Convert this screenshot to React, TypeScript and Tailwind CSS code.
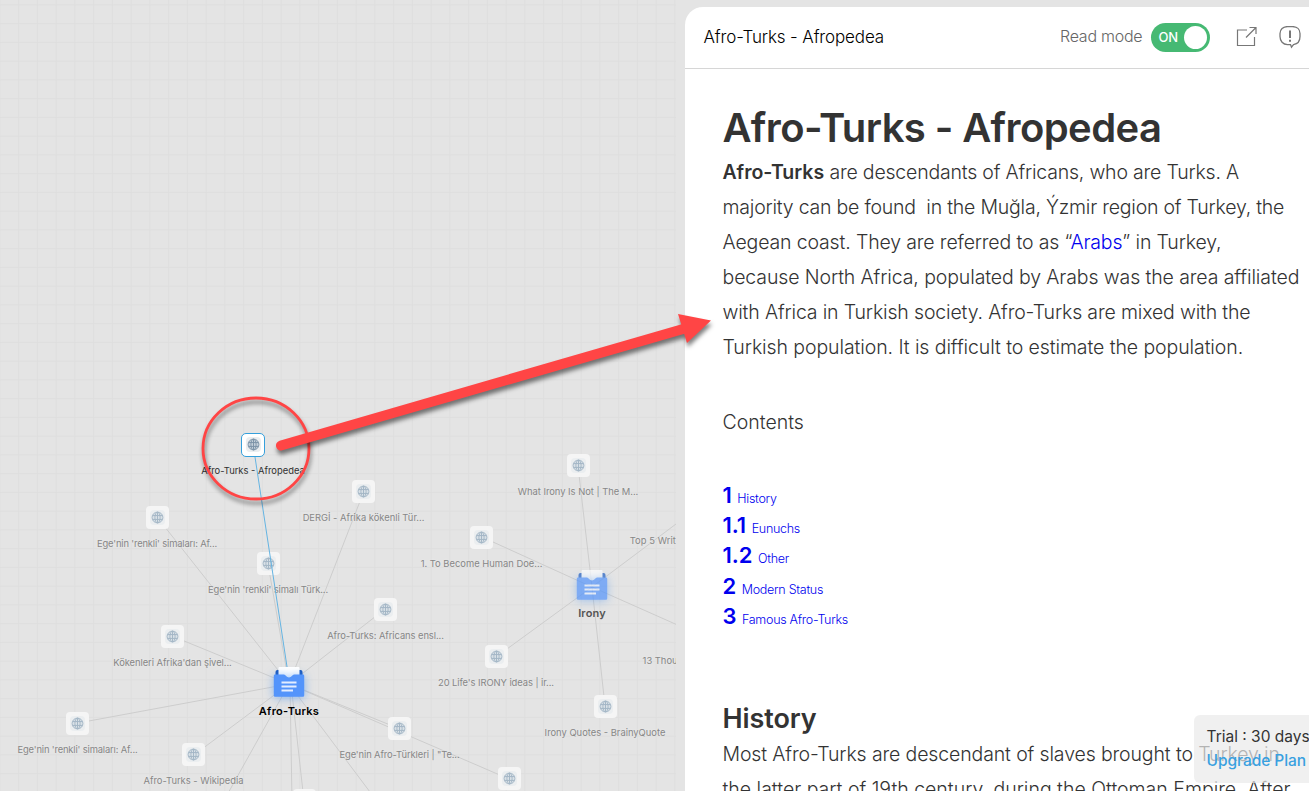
import React from "react";

type Site = { x: number; y: number; label: string; tracking: number; active?: boolean };

const sites: Site[] = [
  { x: 253, y: 444.5, label: "Afro-Turks - Afropedea", tracking: 0, active: true },
  { x: 363.5, y: 491.5, label: "DERGİ - Afrika kökenli Tür...", tracking: -0.02 },
  { x: 157, y: 517.5, label: "Ege'nin 'renkli' simaları: Af...", tracking: -0.15 },
  { x: 268, y: 564, label: "Ege'nin 'renkli' simalı Türk...", tracking: -0.12 },
  { x: 385.5, y: 609.5, label: "Afro-Turks: Africans ensl...", tracking: -0.07 },
  { x: 172.5, y: 636.5, label: "Kökenleri Afrika'dan şivel...", tracking: -0.06 },
  { x: 77.5, y: 723.5, label: "Ege'nin 'renkli' simaları: Af...", tracking: -0.15 },
  { x: 193.5, y: 755, label: "Afro-Turks - Wikipedia", tracking: -0.02 },
  { x: 399.5, y: 729, label: "Ege'nin Afro-Türkleri | \"Te...", tracking: -0.11 },
  { x: 578, y: 466, label: "What Irony Is Not | The M...", tracking: -0.02 },
  { x: 481.5, y: 537.5, label: "1. To Become Human Doe...", tracking: 0 },
  { x: 496, y: 657, label: "20 Life's IRONY ideas | ir...", tracking: -0.07 },
  { x: 605, y: 706.5, label: "Irony Quotes - BrainyQuote", tracking: 0 },
  { x: 509, y: 779, label: "", tracking: 0 },
  { x: 304, y: 801, label: "", tracking: 0 },
  { x: 690, y: 514.5, label: "Top 5 Writing Ironies Exp...", tracking: 0.07 },
  { x: 697, y: 634.5, label: "13 Thoughts on Irony a...", tracking: 0 },
];

const links: number[][] = [
  [364, 491, 289, 684], [157, 517, 289, 684], [268, 564, 289, 684],
  [385, 609, 289, 684], [172, 636, 289, 684], [78, 723, 289, 684],
  [194, 755, 289, 684], [400, 729, 289, 684], [509, 779, 289, 684],
  [304, 801, 291, 684], [292, 801, 290, 684], [379, 804, 289, 684], [222, 804, 289, 684],
  [578, 466, 592, 587], [482, 537, 592, 587], [496, 657, 592, 587],
  [605, 706, 592, 587], [704, 503, 592, 587], [700, 635, 592, 587],
];

function Globe({ active }: { active?: boolean }) {
  return (
    <svg className="h-[13px] w-[13px]" viewBox="0 0 12 12" fill="none" stroke={active ? "#7b93a8" : "#a3b6c5"} strokeWidth="0.9">
      <circle cx="6" cy="6" r="5" fill={active ? "#c3cfd9" : "#d9e1e7"} />
      <ellipse cx="6" cy="6" rx="2.4" ry="5" />
      <path d="M6 1v10M1.400 4.200h9.200M1.400 7.800h9.200" />
    </svg>
  );
}

function SiteNode({ site }: { site: Site }) {
  return (
    <div
      className="absolute flex w-40 -translate-x-1/2 flex-col items-center"
      style={{ left: site.x, top: site.y - 12 }}
    >
      <div
        className={
          site.active
            ? "flex h-6 w-6 items-center justify-center rounded-[5px] border border-[#35a0dc] bg-white"
            : "flex h-[23px] w-[23px] items-center justify-center rounded-[4px] bg-[#f5f5f5]"
        }
      >
        <div className="rounded-sm bg-[#ebeef0] p-px">
          <Globe active={site.active} />
        </div>
      </div>
      <div
        className={
          site.active
            ? "mt-2 whitespace-nowrap text-[9.4px] leading-3 text-[#303030]"
            : "mt-[9px] whitespace-nowrap text-[9.4px] leading-3 text-[#868686] [text-shadow:0_0_2px_#eee]"
        }
        style={{ letterSpacing: site.tracking }}
      >
        {site.label}
      </div>
    </div>
  );
}

function FolderNode({ x, y, label, faded }: { x: number; y: number; label: string; faded?: boolean }) {
  return (
    <div className="absolute flex w-32 -translate-x-1/2 flex-col items-center" style={{ left: x, top: y }}>
      <svg
        className={faded ? "h-[34px] w-[34px] overflow-visible opacity-70" : "h-[34px] w-[34px] overflow-visible"}
        viewBox="0 0 34 34"
      >
        <rect x="3.500" y="4" width="27" height="12" rx="2" fill="#1857bd" />
        <rect x="6.500" y="1" width="21" height="16" rx="1" fill="#fff" />
        <path
          className="[filter:drop-shadow(0_1px_5px_rgba(80,150,240,.65))]"
          d="M3 8.500h9c1.500 0 2.500 3 5 3s3.500-3 5-3H31a1.200 1.200 0 0 1 1.200 1.200V29.500a1.200 1.200 0 0 1-1.200 1.200H3a1.200 1.200 0 0 1-1.200-1.200V9.700A1.200 1.200 0 0 1 3 8.500z"
          fill="#5394fb"
        />
        <path d="M9.500 16.500h15M9.500 20.500h15M9.500 24.500h11.500" stroke="#e3edff" strokeWidth="2" />
      </svg>
      <div
        className={
          faded
            ? "mt-[3px] whitespace-nowrap text-[11px] font-semibold leading-[14px] tracking-[0.15px] text-[#555]"
            : "mt-1 whitespace-nowrap text-[11px] font-semibold leading-[14px] tracking-[0.3px] text-black"
        }
      >
        {label}
      </div>
    </div>
  );
}

function GraphCanvas() {
  return (
    <section className="relative h-full w-[676px] overflow-hidden bg-[#e4e4e4]">
      <svg className="absolute inset-0 h-full w-full">
        <defs>
          <pattern id="grid" x="-0.6" y="4.400" width="18.750" height="18.750" patternUnits="userSpaceOnUse">
            <path d="M.5 0V18.750M0 .5H18.750" stroke="#dedede" strokeWidth="1" />
          </pattern>
        </defs>
        <rect width="100%" height="100%" fill="url(#grid)" />
        {links.map(([x1, y1, x2, y2], i) => (
          <line key={i} x1={x1} y1={y1} x2={x2} y2={y2} stroke="#cdcdcd" strokeWidth="1" />
        ))}
      </svg>
      {sites.map((s, i) => (
        <SiteNode key={i} site={s} />
      ))}
      <svg className="absolute inset-0 h-full w-full">
        <line x1="255" y1="457" x2="287.500" y2="670" stroke="#65b4e2" strokeWidth="1" />
      </svg>
      <FolderNode x={289} y={666} label="Afro-Turks" />
      <FolderNode x={592} y={569} label="Irony" faded />
    </section>
  );
}

const contents = [
  ["1", "History"],
  ["1.1", "Eunuchs"],
  ["1.2", "Other"],
  ["2", "Modern Status"],
  ["3", "Famous Afro-Turks"],
];

function Reader() {
  return (
    <aside className="mt-[7px] flex w-[624px] shrink-0 flex-col overflow-hidden rounded-tl-[18px] bg-white">
      <header className="flex h-[62px] shrink-0 items-center border-b border-[#d6d6d6] pl-[18.500px]">
        <div className="w-[356.500px] whitespace-nowrap text-[17px] font-light tracking-[-0.13px] text-black">Afro-Turks - Afropedea</div>
        <div className="w-[91px] whitespace-nowrap pb-[3px] text-base font-light tracking-[-0.25px] text-[#666]">Read mode</div>
        <div className="flex h-[29px] w-[59px] items-center justify-between rounded-full bg-[#46b973] pl-[7.500px] pr-[3px]">
          <span className="text-[13px] font-medium tracking-[-0.3px] text-white">ON</span>
          <span className="h-[23px] w-[23px] rounded-full bg-white" />
        </div>
        <svg className="ml-[26px] h-6 w-6" viewBox="0 0 24 24" fill="none" stroke="#777" strokeWidth="1.200">
          <path d="M11 4H1.500v15.500h17V11M10 11.500 20 1.500M13.500 1.500H20v6.500" />
        </svg>
        <svg className="ml-[18px] h-6 w-6" viewBox="0 0 24 24" fill="none" stroke="#777" strokeWidth="1.300">
          <path d="M9.500 .6h5c4.500 0 7.500 2.800 7.500 7v3c0 4.500-2.500 7.500-6.500 8L13.500 21.100 12.500 18.600H9.500C5 18.600 2 15.100 2 10.600V7.600C2 3.400 5 .6 9.500 .6z" />
          <path d="M12 4.500v7.500M12 13.800v2" strokeWidth="2" />
        </svg>
      </header>
      <article className="flex flex-col whitespace-nowrap pl-[37.500px] pt-[34px] text-[#333]">
        <h1 className="text-[40px] font-semibold leading-[50px] tracking-[-0.58px]">Afro-Turks - Afropedea</h1>
        <p className="mt-[2px] flex flex-col text-[19.500px] font-light leading-[35px]">
          <span className="tracking-[-0.2px]">
            <b className="font-semibold tracking-normal">Afro-Turks</b> are descendants of Africans, who are Turks. A
          </span>
          <span className="tracking-[-0.22px]">majority can be found&nbsp; in the Muğla, Ýzmir region of Turkey, the</span>
          <span className="tracking-[-0.15px]">
            Aegean coast. They are referred to as “<a className="text-[#0000ee]">Arabs</a>” in Turkey,
          </span>
          <span className="tracking-[-0.11px]">because North Africa, populated by Arabs was the area affiliated</span>
          <span className="tracking-[-0.16px]">with Africa in Turkish society. Afro-Turks are mixed with the</span>
          <span className="tracking-[-0.09px]">Turkish population. It is difficult to estimate the population.</span>
        </p>
        <p className="mt-10 text-[19.500px] font-light leading-[35px]">Contents</p>
        <div className="mt-10 flex flex-col text-[#0000ee]">
          {contents.map(([n, t]) => (
            <div key={n} className="flex h-[30.200px] items-baseline gap-[5.500px]">
              <span className="text-[22px] font-semibold leading-[30px]">{n}</span>
              <span className="text-[12.500px] font-light tracking-[-0.28px]">{t}</span>
            </div>
          ))}
        </div>
        <h2 className="mt-[70px] text-[27px] font-semibold leading-[36px] tracking-[-0.1px]">History</h2>
        <p className="flex flex-col text-[19.500px] font-light leading-[35px]">
          <span className="tracking-[-0.13px]">Most Afro-Turks are descendant of slaves brought to Turkey in</span>
          <span>the latter part of 19th century, during the Ottoman Empire. After</span>
        </p>
      </article>
    </aside>
  );
}

export default function App() {
  return (
    <main className="relative flex h-[791px] w-[1309px] justify-between overflow-hidden bg-[#e4e4e4] font-['Inter',sans-serif]">
      <GraphCanvas />
      <Reader />
      <svg className="pointer-events-none absolute inset-0 h-full w-full">
        <g className="[filter:drop-shadow(1px_4px_2px_rgba(0,0,0,.45))]">
          <ellipse cx="256" cy="448.500" rx="53" ry="50.500" fill="none" stroke="#ff4545" strokeWidth="2.800" />
        </g>
        <g className="[filter:drop-shadow(1px_4px_2px_rgba(0,0,0,.5))]" fill="#ff4545">
          <path d="M281 445.500 690 327" stroke="#ff4545" strokeWidth="10" strokeLinecap="round" />
          <path d="M678 314 711 320.500 687 343z" />
        </g>
      </svg>
      <div className="absolute left-[1194px] top-[715px] h-[68px] w-[130px] whitespace-nowrap rounded-md bg-[#e9e9e9]/70 pl-[12.500px] pt-[10px] text-[15.500px] leading-6">
        <div className="text-[#333]">Trial : 30 days</div>
        <div className="font-medium tracking-[-0.05px] text-[#38a0e0]">Upgrade Plan</div>
      </div>
    </main>
  );
}
